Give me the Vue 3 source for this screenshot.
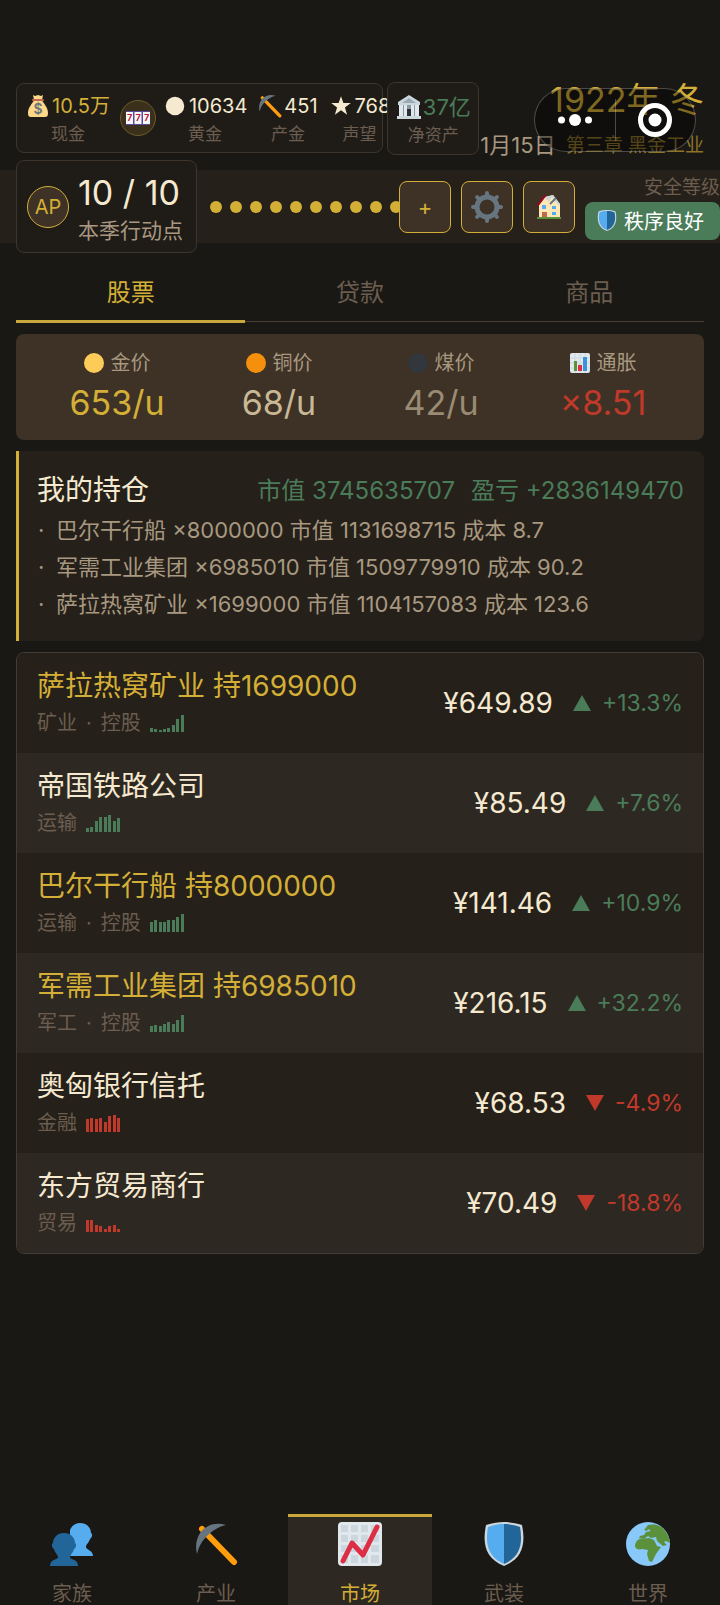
<script setup>
import { ref } from 'vue';

const resources = [
  { id: 'gold', icon: 'coin', value: '10634', label: '黄金' },
  { id: 'output', icon: 'pick', value: '451', label: '产金' },
  { id: 'fame', icon: 'star', value: '768', label: '声望' },
];

const tabs = ['股票', '贷款', '商品'];
const activeTab = ref('股票');

const prices = [
  { icon: 'dot-gold', label: '金价', value: '653/u', tone: 'gold' },
  { icon: 'dot-copper', label: '铜价', value: '68/u', tone: 'copper' },
  { icon: 'dot-coal', label: '煤价', value: '42/u', tone: 'coal' },
  { icon: 'bars', label: '通胀', value: '×8.51', tone: 'down' },
];

const holdings = [
  '巴尔干行船 ×8000000 市值 1131698715 成本 8.7',
  '军需工业集团 ×6985010 市值 1509779910 成本 90.2',
  '萨拉热窝矿业 ×1699000 市值 1104157083 成本 123.6',
];

// history: 每根柱子的高度 (px)
const stocks = [
  { name: '萨拉热窝矿业', held: '1699000', sector: '矿业', price: '649.89', change: '+13.3%', history: [4, 3, 2, 3, 4, 7, 13, 17] },
  { name: '帝国铁路公司', held: '', sector: '运输', price: '85.49', change: '+7.6%', history: [4, 5, 11, 15, 15, 17, 11, 14] },
  { name: '巴尔干行船', held: '8000000', sector: '运输', price: '141.46', change: '+10.9%', history: [10, 12, 10, 10, 12, 12, 15, 18] },
  { name: '军需工业集团', held: '6985010', sector: '军工', price: '216.15', change: '+32.2%', history: [6, 7, 6, 8, 10, 8, 12, 17] },
  { name: '奥匈银行信托', held: '', sector: '金融', price: '68.53', change: '-4.9%', history: [13, 14, 13, 14, 10, 16, 17, 14] },
  { name: '东方贸易商行', held: '', sector: '贸易', price: '70.49', change: '-18.8%', history: [12, 12, 7, 6, 3, 6, 7, 3] },
];

const pages = [
  { icon: 'people', label: '家族' },
  { icon: 'pick', label: '产业' },
  { icon: 'chart', label: '市场' },
  { icon: 'shield', label: '武装' },
  { icon: 'globe', label: '世界' },
];
const activePage = ref('市场');

const isUp = (stock) => stock.change.startsWith('+');
</script>

<template>
  <svg class="sprite" aria-hidden="true">
    <symbol id="coin" viewBox="0 0 22 22"><circle cx="11" cy="11" r="8.500" fill="#f5e9d0" /></symbol>
    <symbol id="star" viewBox="0 0 22 22">
      <path d="M11 2l2.200 6.200h6.800l-5.400 4.100 2 6.700-5.600-4-5.600 4 2-6.700L2 8.200h6.800z" fill="#f5e9d0" />
    </symbol>
    <symbol id="pick" viewBox="0 0 44 44">
      <path d="M8 7l32 33" stroke="#ff9d0d" stroke-width="6" stroke-linecap="round" />
      <path d="M32 3C14-3-2 12 3 32c2-8 5-13 10-18s11-9 19-11z" fill="#66757f" />
    </symbol>
    <symbol id="bank" viewBox="0 0 26 26">
      <path d="M13 1l11 7v3H2V8z" fill="#ccd6dd" />
      <path d="M13 4l7 5H6z" fill="#9aaab4" />
      <path d="M3 11h20v11H3z" fill="#8899a6" />
      <path d="M3 11h4v11H3zM8 11h3v11H8zM15 11h3v11h-3zM19 11h4v11h-4z" fill="#e1e8ed" />
      <path d="M11 15h4v7h-4z" fill="#292f33" />
      <path d="M1 22h24v3H1z" fill="#ccd6dd" />
    </symbol>
    <symbol id="gear" viewBox="0 0 34 34">
      <circle cx="17" cy="17" r="10" fill="none" stroke="#66757f" stroke-width="5" />
      <path
        d="M17 6V3M17 28v3M6 17H3M28 17h3M9.200 9.200L7.100 7.100M24.800 24.800l2.100 2.100M9.200 24.800l-2.100 2.100M24.800 9.200l2.100-2.100"
        stroke="#66757f" stroke-width="4" stroke-linecap="round"
      />
    </symbol>
    <symbol id="house" viewBox="0 0 26 26">
      <path d="M3 11L9 3l5 8v13H3z" fill="#ffe8b6" />
      <path d="M9 3l8-2 7 9v14H13V11z" fill="#ffe8b6" />
      <path d="M9 3l8-2 7 9-1 2-7-9-3 5z" fill="#ccd6dd" />
      <path d="M2 11L9 2" stroke="#a0041e" stroke-width="2" stroke-linecap="round" />
      <path d="M14 10l6-6" stroke="#66757f" stroke-width="2" />
      <path d="M6 18h5v6H6z" fill="#c1694f" />
      <path d="M6 11h4v4H6zM16 12h4v3h-4zM16 18h4v3h-4z" fill="#55acee" />
      <path d="M1 23h24v2H1z" fill="#5c913b" />
    </symbol>
    <symbol id="dot-gold" viewBox="0 0 20 20"><circle cx="10" cy="10" r="10" fill="#fdcb58" /></symbol>
    <symbol id="dot-copper" viewBox="0 0 20 20"><circle cx="10" cy="10" r="10" fill="#f4900c" /></symbol>
    <symbol id="dot-coal" viewBox="0 0 20 20"><circle cx="10" cy="10" r="10" fill="#31373d" /></symbol>
    <symbol id="bars" viewBox="0 0 20 20">
      <rect width="20" height="20" rx="2" fill="#e1e8ed" />
      <path d="M0 5h20M0 10h20M0 15h20M5 0v20M10 0v20M15 0v20" stroke="#ccd6dd" />
      <path d="M4 8h3v10H4z" fill="#5c913b" />
      <path d="M8 12h4v6H8z" fill="#dd2e44" />
      <path d="M13 4h4v14h-4z" fill="#3b94d9" />
    </symbol>
    <symbol id="people" viewBox="0 0 44 44">
      <path d="M30 1c7 0 11 5 11 10 2 1 1 5-1 6-1 4-4 5-4 8 0 3 7 3 7 9H20V8c2-5 6-7 10-7z" fill="#55acee" />
      <path d="M14 11c7 0 11 5 11 10 2 1 1 5-1 6-1 4-4 6-4 8 0 3 8 2 8 9H0c0-7 8-6 8-9 0-2-3-4-4-8-2-1-3-5-1-6 0-5 4-10 11-10z" fill="#226699" />
    </symbol>
    <symbol id="chart" viewBox="0 0 44 44">
      <rect width="44" height="44" rx="4" fill="#e1e8ed" />
      <path
        d="M3 3h7v7H3zM13 3h7v7h-7zM23 3h7v7h-7zM33 3h8v7h-8zM3 13h7v7H3zM13 13h7v7h-7zM23 13h7v7h-7zM33 13h8v7h-8zM3 23h7v7H3zM13 23h7v7h-7zM23 23h7v7h-7zM33 23h8v7h-8zM3 33h7v8H3zM13 33h7v8h-7zM23 33h7v8h-7zM33 33h8v8h-8z"
        fill="#ccd6dd"
      />
      <path d="M5 39l9-18 11 12L39 5" fill="none" stroke="#dd2e44" stroke-width="5" stroke-linecap="round" stroke-linejoin="round" />
    </symbol>
    <symbol id="shield" viewBox="0 0 44 44">
      <path d="M22 0c5 0 12 1 18 3 4 20 0 34-18 41C4 37 0 23 4 3c6-2 13-3 18-3z" fill="#ccd6dd" />
      <path d="M22 2c5 0 11 1 16 3 3 17 0 30-16 37z" fill="#226699" />
      <path d="M22 2C17 2 11 3 6 5 3 22 6 35 22 42z" fill="#55acee" />
    </symbol>
    <symbol id="globe" viewBox="0 0 44 44">
      <circle cx="22" cy="22" r="22" fill="#88c9f9" />
      <path d="M9 24c0-4 4-8 7-7l7-1 5 2 3 6 4 1-5 7-4 8-3-1-2-7 1-4-6-1c-3 1-7 0-7-3z" fill="#5c913b" />
      <path d="M22 3c8-2 14 1 18 7 3 5 4 8 4 11l-4-2-2 1 3 3-4 1-6-5-1-4-5 1-3-2-4 3-5-1 1-2 4-1 2-3 5-1-3-2-1 2-3-1z" fill="#5c913b" />
    </symbol>
  </svg>

  <div class="page">
    <header class="top">
      <section class="box resources">
        <div class="resource">
          <span class="amount gold">
            <svg viewBox="0 0 22 24">
              <path d="M6 1l2 1 3-1 3 1 2-1-1 5H7z" fill="#fdd888" />
              <path d="M7 6h8c1 3 6 7 6 13 0 3-1 4-3 4H4c-2 0-3-1-3-4C1 13 6 9 7 6z" fill="#fdd888" />
              <path d="M6 6h10" stroke="#bf6952" stroke-width="2" stroke-linecap="round" />
              <text x="11" y="20" text-anchor="middle" font-size="14" font-weight="600" fill="#67757f">$</text>
            </svg>10.5万
          </span>
          <span class="caption">现金</span>
        </div>
        <button class="slot" aria-label="老虎机">
          <svg viewBox="0 0 24 14">
            <path d="M0 0h24v14H0z" fill="#5b4a9c" />
            <path d="M0 1h7v12H0zM8.500 1h7v12h-7zM17 1h7v12h-7z" fill="#f5f8fa" />
            <g font-size="9" font-weight="700" fill="#be1931" text-anchor="middle">
              <text x="3.500" y="10">7</text>
              <text x="12" y="10">7</text>
              <text x="20.500" y="10">7</text>
            </g>
          </svg>
        </button>
        <div v-for="item in resources" :key="item.id" class="resource">
          <span class="amount"><svg><use :href="'#' + item.icon" /></svg>{{ item.value }}</span>
          <span class="caption">{{ item.label }}</span>
        </div>
      </section>
      <section class="box assets">
        <span class="net"><svg><use href="#bank" /></svg>37亿</span>
        <span class="caption">净资产</span>
      </section>
      <section class="calendar">
        <div class="year">1922年 冬</div>
        <div class="chapter"><span class="date">1月15日</span><span>第三章 黑金工业</span></div>
      </section>
      <div class="capsule">
        <button aria-label="更多">
          <svg viewBox="0 0 34 12"><circle cx="3.500" cy="6" r="3.500" /><circle cx="17" cy="6" r="6" /><circle cx="30.500" cy="6" r="3.500" /></svg>
        </button>
        <button aria-label="关闭">
          <svg viewBox="0 0 34 34"><circle cx="17" cy="17" r="14.500" fill="none" stroke="#fff" stroke-width="5" /><circle cx="17" cy="17" r="6.500" /></svg>
        </button>
      </div>
    </header>

    <section class="action-bar">
      <div class="box points">
        <span class="ap">AP</span>
        <div class="points-text">
          <div class="count">10 / 10</div>
          <div class="count-label">本季行动点</div>
        </div>
      </div>
      <div class="pips"><i v-for="n in 10" :key="n"></i></div>
      <div class="tools">
        <button>+</button>
        <button aria-label="设置"><svg class="gear"><use href="#gear" /></svg></button>
        <button aria-label="家园"><svg class="house"><use href="#house" /></svg></button>
      </div>
      <div class="security">
        <span class="security-label">安全等级</span>
        <span class="badge"><svg><use href="#shield" /></svg>秩序良好</span>
      </div>
    </section>

    <main>
      <div class="tabs">
        <button v-for="tab in tabs" :key="tab" :class="{ active: tab === activeTab }" @click="activeTab = tab">{{ tab }}</button>
      </div>

      <section class="prices">
        <div v-for="item in prices" :key="item.label">
          <div class="price-label"><svg><use :href="'#' + item.icon" /></svg>{{ item.label }}</div>
          <div class="price-value" :class="item.tone">{{ item.value }}</div>
        </div>
      </section>

      <section class="holdings">
        <div class="holdings-head">
          <h2>我的持仓</h2>
          <div class="summary"><span>市值 3745635707</span><span>盈亏 +2836149470</span></div>
        </div>
        <ul>
          <li v-for="line in holdings" :key="line">{{ line }}</li>
        </ul>
      </section>

      <section class="stocks">
        <div v-for="stock in stocks" :key="stock.name" class="stock" :class="isUp(stock) ? 'up' : 'down'">
          <div class="stock-main">
            <div class="stock-name" :class="{ gold: stock.held }">{{ stock.name }}<template v-if="stock.held"> 持{{ stock.held }}</template></div>
            <div class="stock-info">
              <span>{{ stock.sector }}</span>
              <template v-if="stock.held"><span>·</span><span>控股</span></template>
              <span class="spark"><i v-for="(h, i) in stock.history" :key="i" :style="{ height: h + 'px' }"></i></span>
            </div>
          </div>
          <div class="stock-price">¥{{ stock.price }}</div>
          <div class="change">
            <svg viewBox="0 0 18 16"><path :d="isUp(stock) ? 'M9 0l9 16H0z' : 'M9 16l9-16H0z'" /></svg>
            {{ stock.change }}
          </div>
        </div>
      </section>
    </main>

    <nav>
      <button v-for="page in pages" :key="page.label" :class="{ active: page.label === activePage }" @click="activePage = page.label">
        <svg><use :href="'#' + page.icon" /></svg>
        {{ page.label }}
      </button>
    </nav>
  </div>
</template>

<style>
body {
  background: #1a1814;
}
</style>

<style scoped>
.sprite {
  position: absolute;
  width: 0;
  height: 0;
}

.page {
  display: flex;
  flex-direction: column;
  min-height: 100vh;
  overflow-x: hidden;
  background: #1a1814;
  color: #f5e9d0;
  font-family: Inter, "Noto Sans CJK SC", sans-serif;
  box-sizing: border-box;
}

.page * {
  box-sizing: border-box;
}

button {
  margin: 0;
  padding: 0;
  border: none;
  background: none;
  color: inherit;
  font: inherit;
  cursor: pointer;
}

svg {
  flex: none;
}

.gold {
  color: #d4af37;
}

.box {
  background: #1f1c17;
  border: 1px solid #3d352b;
  border-radius: 8px;
}

/* 顶部状态栏 */
.top {
  position: relative;
  display: flex;
  align-items: flex-start;
  gap: 4px;
  padding: 80px 16px 4px;
}

.resources {
  display: flex;
  align-items: center;
  flex: 1;
  min-width: 0;
  gap: 11px;
  height: 70px;
  margin-top: 3px;
  padding: 0 9px;
}

.resource {
  display: flex;
  flex-direction: column;
  align-items: center;
  flex: none;
  padding-top: 4px;
}

.amount,
.net {
  display: flex;
  align-items: center;
  gap: 2px;
  font-size: 20px;
  line-height: 28px;
}

.amount svg {
  width: 24px;
  height: 24px;
}

.caption {
  color: #6b5d4f;
  font-size: 17px;
  line-height: 28px;
}

.slot {
  display: flex;
  align-items: center;
  justify-content: center;
  flex: none;
  width: 36px;
  height: 36px;
  margin: 0 -4px 0 -1px;
  border: 1px solid #6e5c26;
  border-radius: 50%;
  background: #3a301c;
}

.slot svg {
  width: 24px;
  height: 14px;
}

.assets {
  position: relative;
  display: flex;
  flex-direction: column;
  align-items: center;
  justify-content: center;
  flex: none;
  width: 92px;
  height: 73px;
  margin-top: 2px;
  padding-top: 4px;
}

.net {
  gap: 1px;
  color: #4a7c59;
  font-size: 22px;
}

.net svg {
  width: 26px;
  height: 26px;
}

.calendar {
  display: flex;
  flex-direction: column;
  align-items: flex-end;
  flex: none;
  margin-left: -3px;
  white-space: nowrap;
}

.year {
  color: #d4af37;
  font-size: 34px;
  line-height: 40px;
}

.chapter {
  display: flex;
  align-items: center;
  gap: 10px;
  height: 46px;
  color: #8c7428;
  font-size: 19px;
}

.date {
  color: #a89880;
  font-size: 22px;
}

.capsule {
  position: absolute;
  top: 88px;
  right: 24px;
  display: flex;
  align-items: center;
  width: 162px;
  height: 64px;
  border: 1px solid rgba(255, 255, 255, 0.25);
  border-radius: 32px;
  background: rgba(0, 0, 0, 0.4);
}

.capsule button {
  display: flex;
  align-items: center;
  justify-content: center;
  flex: 1;
  height: 42px;
}

.capsule button + button {
  border-left: 1px solid rgba(255, 255, 255, 0.25);
}

.capsule svg {
  width: 34px;
  fill: #fff;
}

/* 行动点 */
.action-bar {
  display: flex;
  align-items: center;
  height: 73px;
  padding-left: 16px;
  background: #252019;
}

.points {
  display: flex;
  align-items: center;
  flex: none;
  gap: 9px;
  height: 93px;
  padding: 0 13px 0 10px;
}

.ap {
  display: flex;
  align-items: center;
  justify-content: center;
  width: 42px;
  height: 42px;
  border: 1px solid #d4af37;
  border-radius: 50%;
  background: #3d3225;
  color: #d4af37;
  font-size: 20px;
}

.points-text {
  padding-top: 4px;
}

.count {
  font-size: 34px;
  line-height: 44px;
}

.count-label {
  color: #a89880;
  font-size: 21px;
  line-height: 32px;
}

.pips {
  display: flex;
  flex: 1;
  min-width: 0;
  gap: 8px;
  padding-left: 13px;
}

.pips i {
  flex: none;
  width: 12px;
  height: 12px;
  border-radius: 50%;
  background: #d4af37;
}

.tools {
  position: relative;
  display: flex;
  flex: none;
  gap: 10px;
}

.tools button {
  display: flex;
  align-items: center;
  justify-content: center;
  width: 52px;
  height: 52px;
  border: 1px solid #d4af37;
  border-radius: 8px;
  background: #3d3225;
  color: #d4af37;
  font-size: 22px;
}

.gear {
  width: 34px;
  height: 34px;
}

.house {
  width: 26px;
  height: 26px;
}

.security {
  display: flex;
  flex-direction: column;
  align-items: flex-end;
  flex: none;
  margin-left: 10px;
}

.security-label {
  color: #6b5d4f;
  font-size: 19px;
  line-height: 28px;
}

.badge {
  display: flex;
  align-items: center;
  gap: 6px;
  height: 38px;
  padding: 0 16px 0 11px;
  border-radius: 8px;
  background: #4a7c59;
  color: #fff;
  font-size: 20px;
}

.badge svg {
  width: 22px;
  height: 21px;
}

main {
  padding: 17px 16px 24px;
}

.tabs {
  display: flex;
  border-bottom: 1px solid #4a4033;
}

.tabs button {
  flex: 1;
  height: 63px;
  margin-bottom: -2px;
  border-bottom: 3px solid transparent;
  color: #6b5d4f;
  font-size: 24px;
}

.tabs .active {
  border-color: #c9a73d;
  color: #d4af37;
}

.prices {
  display: grid;
  grid-template-columns: repeat(4, 1fr);
  margin-top: 12px;
  padding: 10px 20px 16px;
  border-radius: 8px;
  background: #3d3225;
  text-align: center;
}

.price-label {
  display: flex;
  align-items: center;
  justify-content: center;
  gap: 7px;
  color: #a89880;
  font-size: 20px;
  line-height: 38px;
}

.price-label svg {
  width: 20px;
  height: 20px;
}

.price-value {
  font-size: 34px;
  line-height: 42px;
}

.copper {
  color: #c9b896;
}

.coal {
  color: #9a8b74;
}

.price-value.down {
  color: #c0392b;
}

.holdings {
  margin-top: 11px;
  padding: 18px 20px 18px 18px;
  border-left: 3px solid #d4af37;
  border-radius: 0 8px 8px 0;
  background: #252019;
}

.holdings-head {
  display: flex;
  align-items: center;
  justify-content: space-between;
}

h2 {
  margin: 0;
  font-size: 28px;
  font-weight: 400;
  line-height: 43px;
}

.summary {
  display: flex;
  gap: 16px;
  color: #4a7c59;
  font-size: 24px;
  line-height: 40px;
}

ul {
  margin: 0;
  padding: 0;
  list-style: none;
}

li {
  display: flex;
  color: #a89880;
  font-size: 22px;
  line-height: 37px;
}

li::before {
  content: "·";
  width: 18px;
  padding-left: 1px;
}

/* 股票列表 */
.stocks {
  margin-top: 11px;
  border: 1px solid #443c32;
  border-radius: 8px;
  overflow: hidden;
}

.stock {
  display: flex;
  align-items: center;
  height: 100px;
  padding: 0 20px;
  background: #252019;
}

.stock:nth-child(even) {
  background: #2e2822;
}

.stock-main {
  flex: 1;
}

.stock-name {
  font-size: 28px;
  line-height: 40px;
}

.stock-info {
  display: flex;
  align-items: center;
  gap: 9px;
  color: #6b5d4f;
  font-size: 20px;
  line-height: 34px;
}

.spark {
  display: flex;
  align-items: flex-end;
  justify-content: space-between;
  width: 34px;
  height: 18px;
}

.spark i {
  width: 3px;
  background: currentColor;
}

.stock-price {
  font-size: 28px;
}

.change {
  display: flex;
  align-items: center;
  gap: 11px;
  margin-left: 20px;
  font-size: 23px;
}

.change svg {
  width: 18px;
  height: 16px;
  fill: currentColor;
}

.up .change,
.up .spark {
  color: #4a7c59;
}

.down .change,
.down .spark {
  color: #c0392b;
}

/* 底部导航 */
nav {
  display: flex;
  margin-top: auto;
}

nav button {
  display: flex;
  flex-direction: column;
  align-items: center;
  flex: 1;
  gap: 17px;
  padding-top: 5px;
  border-top: 3px solid transparent;
  color: #6b5d4f;
  font-size: 20px;
  line-height: 22px;
}

nav .active {
  border-color: #c9a73d;
  background: #2e2822;
  color: #d4af37;
}

nav svg {
  width: 44px;
  height: 44px;
}
</style>
